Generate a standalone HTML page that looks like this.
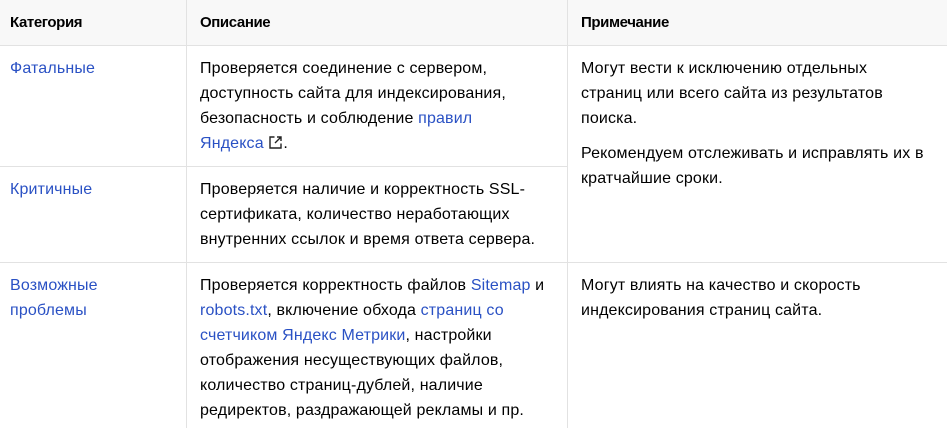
<!DOCTYPE html>
<html><head><meta charset="utf-8"><style>
body{margin:0;width:947px;height:428px;overflow:hidden;background:#fff;font-family:"Liberation Sans",sans-serif;font-size:16px;color:#000;position:relative}
.h{position:absolute;left:0;top:0;width:947px;height:45px;background:#f8f8f8}
.ln{position:absolute;background:#e2e2e2}
.t{position:absolute;line-height:25px;white-space:nowrap;letter-spacing:0.15px}
.b{font-weight:bold;font-size:15px;letter-spacing:-0.4px}
a{color:#2a51c4;text-decoration:none}
</style></head><body>
<div class="h"></div>
<div class="ln" style="left:0;top:45px;width:947px;height:1px"></div>
<div class="ln" style="left:0;top:166px;width:567px;height:1px"></div>
<div class="ln" style="left:0;top:262px;width:947px;height:1px"></div>
<div class="ln" style="left:186px;top:0;width:1px;height:428px"></div>
<div class="ln" style="left:567px;top:0;width:1px;height:428px"></div>

<div class="t b" style="left:10px;top:10px">Категория</div>
<div class="t b" style="left:200px;top:10px">Описание</div>
<div class="t b" style="left:581px;top:10px">Примечание</div>

<div class="t" style="left:10px;top:56px"><a>Фатальные</a></div>
<div class="t" style="left:200px;top:56px">Проверяется соединение с сервером,<br>доступность сайта для индексирования,<br>безопасность и соблюдение <a>правил<br>Яндекса</a> <svg width="15" height="15" viewBox="0 0 15 15" style="vertical-align:-2px"><path d="M6.5 2H2v11h11V8.5" fill="none" stroke="#222" stroke-width="1.4"/><path d="M9 2h4v4M13 2L7 8" fill="none" stroke="#222" stroke-width="1.4"/></svg>.</div>
<div class="t" style="left:581px;top:56px">Могут вести к исключению отдельных<br>страниц или всего сайта из результатов<br>поиска.</div>
<div class="t" style="left:581px;top:141px">Рекомендуем отслеживать и исправлять их в<br>кратчайшие сроки.</div>

<div class="t" style="left:10px;top:177px"><a>Критичные</a></div>
<div class="t" style="left:200px;top:177px">Проверяется наличие и корректность SSL-<br>сертификата, количество неработающих<br>внутренних ссылок и время ответа сервера.</div>

<div class="t" style="left:10px;top:273px"><a>Возможные<br>проблемы</a></div>
<div class="t" style="left:200px;top:273px">Проверяется корректность файлов <a>Sitemap</a> и<br><a>robots.txt</a>, включение обхода <a>страниц со<br>счетчиком Яндекс Метрики</a>, настройки<br>отображения несуществующих файлов,<br>количество страниц-дублей, наличие<br>редиректов, раздражающей рекламы и пр.</div>
<div class="t" style="left:581px;top:273px">Могут влиять на качество и скорость<br>индексирования страниц сайта.</div>
</body></html>
